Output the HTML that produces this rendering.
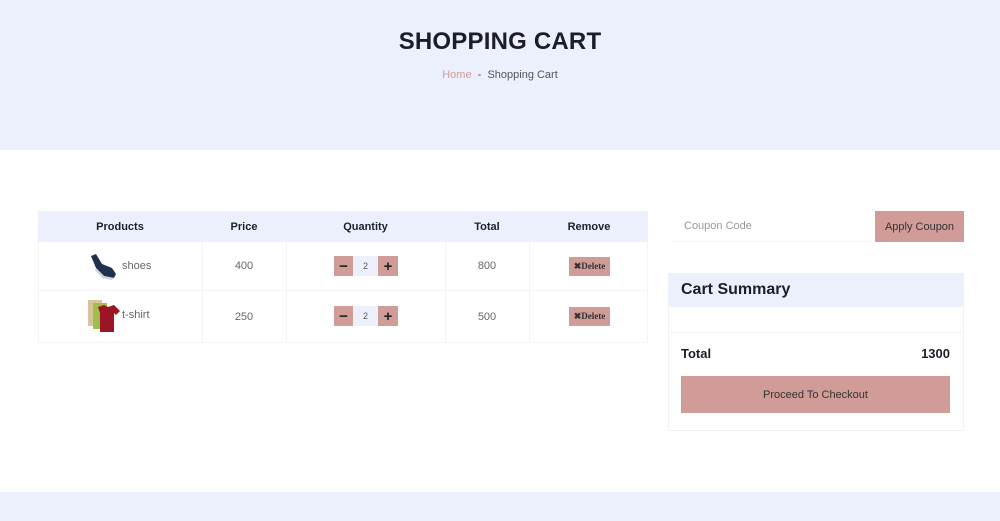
<!DOCTYPE html><html><head><style>
*{margin:0;padding:0;box-sizing:border-box}
body{width:1000px;height:521px;position:relative;background:#fff;font-family:"Liberation Sans",sans-serif;color:#222;overflow:hidden}
.a{position:absolute}
.c{display:flex;align-items:center;justify-content:center}
.th{font-size:11px;font-weight:bold;color:#1f1f2a}
.td{font-size:11px;color:#666}
.pk{background:#d19c97}
</style></head><body>
<div class="a" style="left:0;top:0;width:1000px;height:150px;background:#ecf0fd"></div>
<div class="a c" style="left:0;top:26px;width:1000px;height:32px;font-size:24px;font-weight:bold;color:#1d1d28;letter-spacing:0.2px">SHOPPING CART</div>
<div class="a c" style="left:0;top:67px;width:1000px;height:16px;font-size:11px;color:#555"><span style="color:#d19c97">Home</span>&nbsp; - &nbsp;Shopping Cart</div>

<div class="a" style="left:38px;top:211px;width:610px;height:132px;border:1px solid #f4f4f4"></div>
<div class="a" style="left:38px;top:211px;width:610px;height:31px;background:#ecf0fd"></div>
<div class="a" style="left:38px;top:290px;width:610px;height:1px;background:#f4f4f4"></div>
<div class="a" style="left:202px;top:242px;width:1px;height:100px;background:#f4f4f4"></div>
<div class="a" style="left:286px;top:242px;width:1px;height:100px;background:#f4f4f4"></div>
<div class="a" style="left:445px;top:242px;width:1px;height:100px;background:#f4f4f4"></div>
<div class="a" style="left:529px;top:242px;width:1px;height:100px;background:#f4f4f4"></div>
<div class="a c th" style="left:38px;top:211px;width:164px;height:31px">Products</div>
<div class="a c th" style="left:202px;top:211px;width:84px;height:31px">Price</div>
<div class="a c th" style="left:286px;top:211px;width:159px;height:31px">Quantity</div>
<div class="a c th" style="left:445px;top:211px;width:84px;height:31px">Total</div>
<div class="a c th" style="left:529px;top:211px;width:120px;height:31px">Remove</div>

<svg class="a" style="left:88px;top:250px" width="32" height="32" viewBox="0 0 32 32"><path d="M3 6 L8 4 L14 14 L24 18 L28 24 L26 28 L16 26 L8 18 Z" fill="#22304f"/><path d="M8 18 L16 26 L26 28 L24 30 L14 28 L7 20Z" fill="#cfd4de"/></svg>
<div class="a td" style="left:122px;top:260px">shoes</div>
<svg class="a" style="left:86px;top:297px" width="34" height="36" viewBox="0 0 34 36"><rect x="2" y="3" width="14" height="26" fill="#d8c49b"/><rect x="7" y="6" width="14" height="26" fill="#9fbf4a"/><path d="M12 10 L18 8 L22 10 L28 8 L34 14 L30 18 L28 16 L28 35 L14 35 L14 16 Z" fill="#9b1524"/></svg>
<div class="a td" style="left:122px;top:309px">t-shirt</div>

<div class="a c td" style="left:202px;top:242px;width:84px;height:48px">400</div>
<div class="a c td" style="left:202px;top:291px;width:84px;height:51px">250</div>
<div class="a c td" style="left:445px;top:242px;width:84px;height:48px">800</div>
<div class="a c td" style="left:445px;top:291px;width:84px;height:51px">500</div>

<div class="a c pk" style="left:334px;top:256px;width:19px;height:20px;font-size:15px;font-weight:bold">−</div>
<div class="a c" style="left:353px;top:256px;width:25px;height:20px;background:#ecf0fd;font-size:9px;color:#555">2</div>
<div class="a c pk" style="left:378px;top:256px;width:20px;height:20px;font-size:15px;font-weight:bold">+</div>
<div class="a c pk" style="left:334px;top:306px;width:19px;height:20px;font-size:15px;font-weight:bold">−</div>
<div class="a c" style="left:353px;top:306px;width:25px;height:20px;background:#ecf0fd;font-size:9px;color:#555">2</div>
<div class="a c pk" style="left:378px;top:306px;width:20px;height:20px;font-size:15px;font-weight:bold">+</div>

<div class="a c pk" style="left:569px;top:257px;width:41px;height:19px;font-family:'Liberation Serif',serif;font-size:9px;font-weight:bold;color:#333">✖Delete</div>
<div class="a c pk" style="left:569px;top:307px;width:41px;height:19px;font-family:'Liberation Serif',serif;font-size:9px;font-weight:bold;color:#333">✖Delete</div>

<div class="a" style="left:672px;top:211px;width:203px;height:31px;border-bottom:1px solid #f4f4f4"></div>
<div class="a td" style="left:684px;top:220px;color:#999">Coupon Code</div>
<div class="a c pk" style="left:875px;top:211px;width:89px;height:31px;font-size:11px;color:#333">Apply Coupon</div>

<div class="a" style="left:668px;top:273px;width:296px;height:158px;border:1px solid #f2f2f2"></div>
<div class="a" style="left:668px;top:273px;width:296px;height:34px;background:#ecf0fd"></div>
<div class="a" style="left:681px;top:281px;font-size:16px;font-weight:bold;color:#1d1d28">Cart Summary</div>
<div class="a" style="left:668px;top:332px;width:296px;height:1px;background:#f2f2f2"></div>
<div class="a" style="left:681px;top:346px;font-size:13px;font-weight:bold;color:#1d1d28">Total</div>
<div class="a" style="left:900px;top:346px;width:50px;text-align:right;font-size:13px;font-weight:bold;color:#1d1d28">1300</div>
<div class="a c pk" style="left:681px;top:376px;width:269px;height:37px;font-size:11px;color:#333">Proceed To Checkout</div>

<div class="a" style="left:0;top:492px;width:1000px;height:29px;background:#ecf0fd"></div>
</body></html>
